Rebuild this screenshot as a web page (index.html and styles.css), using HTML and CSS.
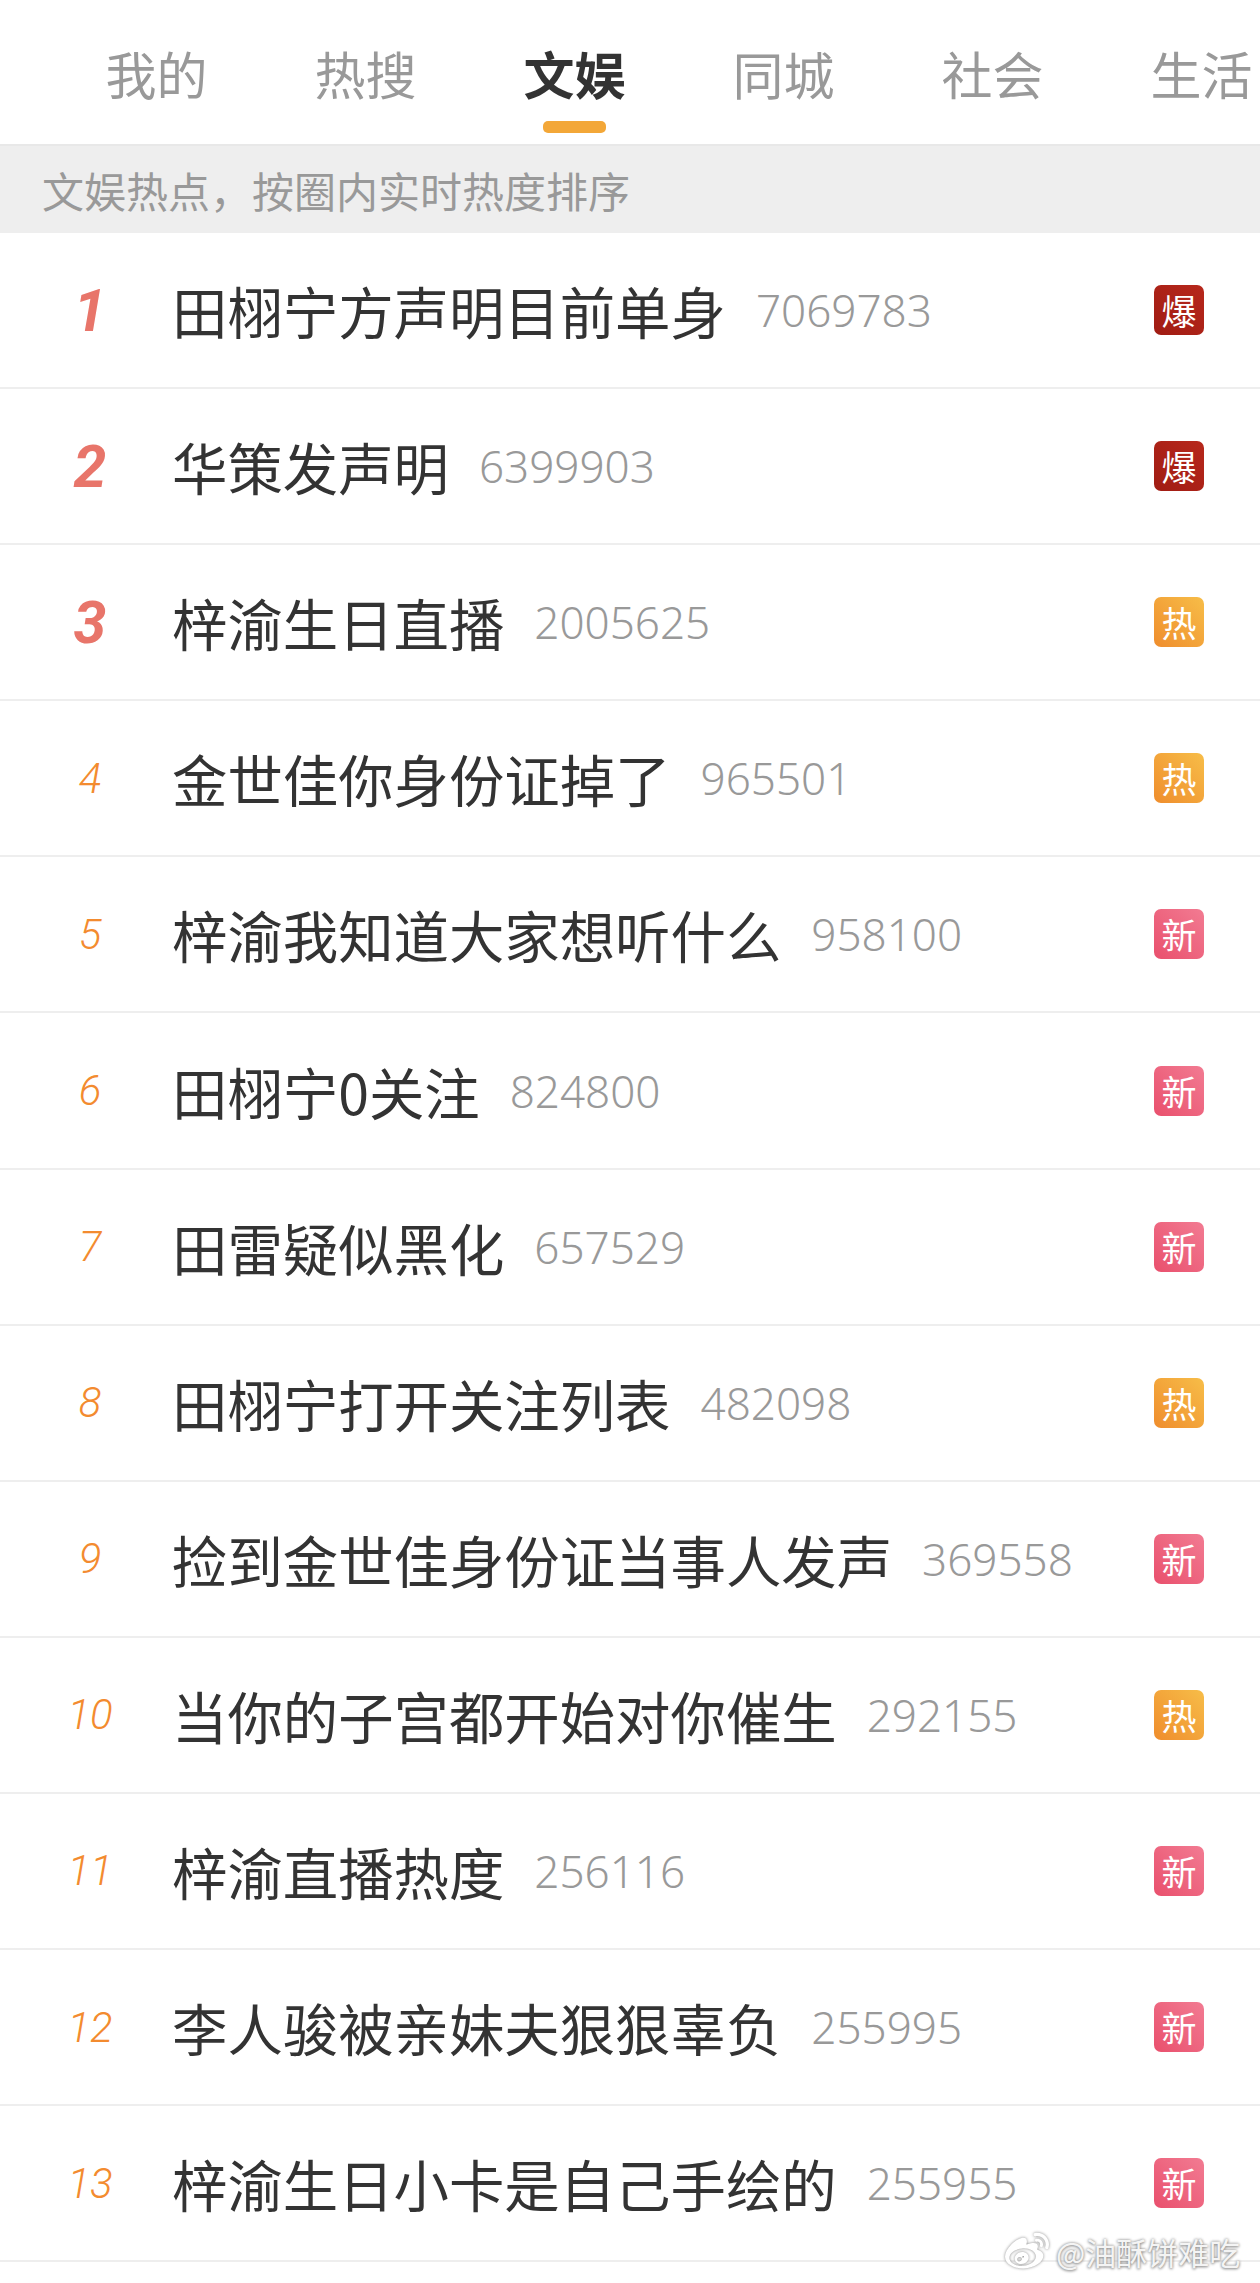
FILE: index.html
```html
<!DOCTYPE html>
<html lang="zh-CN">
<head>
    <meta charset="utf-8">
    <title>微博热搜 - 文娱</title>
    <link rel="stylesheet" href="styles.css">
</head>
<body>

<nav class="tabs">
    <a class="tab">我的</a>
    <a class="tab">热搜</a>
    <a class="tab active">文娱</a>
    <a class="tab">同城</a>
    <a class="tab">社会</a>
    <a class="tab">生活</a>
</nav>

<div class="notice">文娱热点，按圈内实时热度排序</div>

<ul class="list">
    <li class="row"><span class="rank top">1</span><span class="title">田栩宁方声明目前单身</span><span class="count">7069783</span><span class="badge bao">爆</span></li>
    <li class="row"><span class="rank top">2</span><span class="title">华策发声明</span><span class="count">6399903</span><span class="badge bao">爆</span></li>
    <li class="row"><span class="rank top">3</span><span class="title">梓渝生日直播</span><span class="count">2005625</span><span class="badge re">热</span></li>
    <li class="row"><span class="rank">4</span><span class="title">金世佳你身份证掉了</span><span class="count">965501</span><span class="badge re">热</span></li>
    <li class="row"><span class="rank">5</span><span class="title">梓渝我知道大家想听什么</span><span class="count">958100</span><span class="badge xin">新</span></li>
    <li class="row"><span class="rank">6</span><span class="title">田栩宁0关注</span><span class="count">824800</span><span class="badge xin">新</span></li>
    <li class="row"><span class="rank">7</span><span class="title">田雷疑似黑化</span><span class="count">657529</span><span class="badge xin">新</span></li>
    <li class="row"><span class="rank">8</span><span class="title">田栩宁打开关注列表</span><span class="count">482098</span><span class="badge re">热</span></li>
    <li class="row"><span class="rank">9</span><span class="title">捡到金世佳身份证当事人发声</span><span class="count">369558</span><span class="badge xin">新</span></li>
    <li class="row"><span class="rank">10</span><span class="title">当你的子宫都开始对你催生</span><span class="count">292155</span><span class="badge re">热</span></li>
    <li class="row"><span class="rank">11</span><span class="title">梓渝直播热度</span><span class="count">256116</span><span class="badge xin">新</span></li>
    <li class="row"><span class="rank">12</span><span class="title">李人骏被亲妹夫狠狠辜负</span><span class="count">255995</span><span class="badge xin">新</span></li>
    <li class="row"><span class="rank">13</span><span class="title">梓渝生日小卡是自己手绘的</span><span class="count">255955</span><span class="badge xin">新</span></li>
</ul>

<div class="watermark">
    <svg class="wm-logo" viewBox="0 0 512 512" aria-hidden="true">
        <path d="M407 177.6c7.6-24-13.4-46.8-37.4-41.7-22 4.8-28.8-28.1-7.1-32.8 50.1-10.9 92.3 37.1 76.5 84.8-6.8 21.2-38.8 10.8-32-10.3zM214.8 446.7C108.5 446.7 0 395.3 0 310.4c0-44.3 28-95.4 76.3-143.7C176 67 279.5 65.8 249.9 161c-4 13.1 12.3 5.7 12.3 6 79.5-33.6 140.5-16.8 114 51.4-3.7 9.4 1.1 10.9 8.3 13.1 135.7 42.3 34.8 215.2-169.7 215.2zm143.7-146.3c-5.4-55.7-78.5-94-163.4-85.7-84.8 8.6-148.8 60.3-143.4 116s78.5 94 163.4 85.7c84.8-8.6 148.8-60.3 143.4-116zM347.9 35.1c-25.9 5.6-16.8 43.7 8.3 38.3 72.3-15.2 134.8 52.8 111.7 124-7.4 24.2 29.1 37 37.4 12 31.9-99.8-55.1-195.9-157.4-174.3zm-78.5 311c-17.1 38.8-66.8 60-109.1 46.3-40.8-13.1-58-53.4-40.3-89.7 17.7-35.4 63.1-55.4 103.4-45.1 42 10.8 63.1 50.2 46 88.5zm-86.3-30c-12.9-5.4-30 .3-38 12.9-8.3 12.9-4.3 28 8.6 34 13.1 6 30.8.3 39.1-12.9 8-13.1 3.7-28.3-9.7-34zm32.6-13.4c-5.1-1.7-11.4.6-14.3 5.4-2.9 5.1-1.4 10.6 3.7 12.9 5.1 2 11.7-.3 14.6-5.4 2.8-5.2 1.1-10.9-4-12.9z"/>
    </svg>
    <span>@油酥饼难吃</span>
</div>

</body>
</html>
```

FILE: styles.css
```css
:root {
    --cjk: "Noto Sans CJK SC", "Noto Sans", sans-serif;
    --line: #eeeeee;
}

html, body {
    margin: 0;
    background: white;
}

body {
    position: relative;
    height: 2283px;
    overflow: hidden;
    font-family: var(--cjk);
}

.tabs {
    display: flex;
    height: 144px;
    padding-left: 52px;
    overflow: hidden;
}

.tab {
    position: relative;
    flex: 0 0 209px;
    padding-top: 36px;
    font-size: 51px;
    line-height: 74px;
    text-align: center;
    color: #999;
}

.tab.active {
    font-weight: bold;
    color: #333;
}

.tab.active::after {
    content: "";
    position: absolute;
    left: 73px;
    bottom: 11px;
    width: 63px;
    height: 12px;
    border-radius: 5px;
    background: #f3a738;
}

.notice {
    height: 87px;
    padding-left: 42px;
    border-top: 2px solid #e8e8e8;
    font-size: 42px;
    line-height: 87px;
    color: #999;
    background: #eee;
}

.list {
    margin: 0;
    padding: 0;
    list-style: none;
}

.row {
    display: flex;
    align-items: center;
    height: 154.1px;
    padding: 0 56px 0 30px;
    border-bottom: 2px solid var(--line);
}

.rank {
    flex: 0 0 120px;
    font-family: Roboto, sans-serif;
    font-size: 42px;
    font-style: italic;
    font-weight: 300;
    text-align: center;
    color: #f38b2f;
}

.rank.top {
    font-size: 59px;
    font-weight: bold;
    color: #e8756a;
}

.title {
    margin-left: 22px;
    font-size: 55.4px;
    color: #333;
}

.count {
    margin-left: 30px;
    font-family: "Noto Sans", sans-serif;
    font-size: 44px;
    font-weight: 300;
    color: #999;
}

.badge {
    width: 50px;
    height: 50px;
    margin-left: auto;
    border-radius: 7px;
    font-size: 35px;
    line-height: 50px;
    text-align: center;
    color: white;
}

.bao {
    background: linear-gradient(45deg, #a01c13, #b7281c);
}

.re {
    background: linear-gradient(45deg, #ef8d2d, #f7bd48);
}

.xin {
    background: linear-gradient(45deg, #e9506d, #f27b92);
}

.watermark {
    position: absolute;
    left: 1005px;
    top: 2230px;
    display: flex;
    align-items: center;
    gap: 7px;
    font-size: 31px;
    line-height: 42px;
    white-space: nowrap;
    color: #f4f4f4;
    text-shadow: 0 0 3px #888, 0 1px 3px #999;
}

.wm-logo {
    width: 44px;
    height: 44px;
    fill: white;
    filter: drop-shadow(0 0 1.5px #888);
}
```
